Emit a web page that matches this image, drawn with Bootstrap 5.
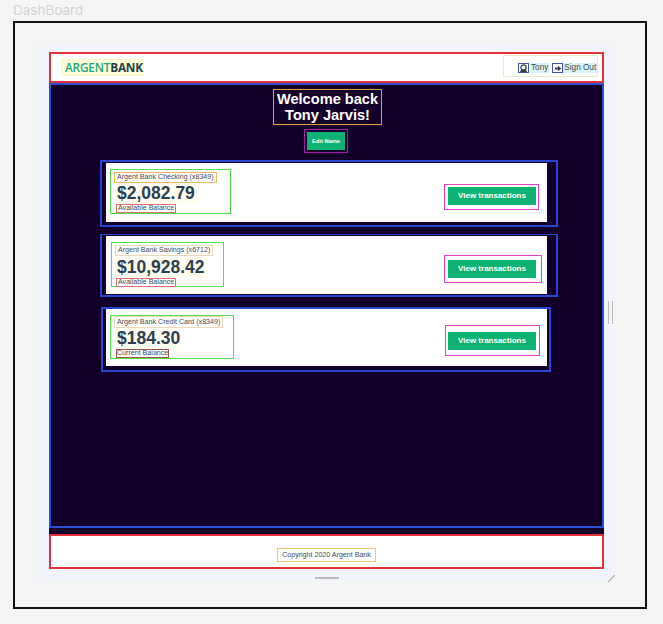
<!DOCTYPE html>
<html lang="en">
<head>
<meta charset="utf-8">
<title>DashBoard</title>
<link href="https://cdn.jsdelivr.net/npm/bootstrap@5.3.0/dist/css/bootstrap.min.css" rel="stylesheet">
<style>
html,body{height:100%}
body{background:#f5f5f5;font-family:"Liberation Sans",Arial,sans-serif;margin:0;overflow:hidden}
.page-title{font-family:Inter,sans-serif;font-size:13.5px;line-height:14px;color:#d4d4d4;margin:0;padding:3px 0 4px 13px;height:21px}
.frame{box-sizing:border-box;width:634px;height:588px;margin-left:13px;border:2px solid #111;padding:22px 31px 0 23px}
.panel{box-sizing:border-box;width:576px;height:536px;background:#f2f4fb;padding:7px 10px 0 11px;position:relative}
.app-head{height:31px;background:#fff;border:2px solid #e5303a;padding:5px 4px 3px 10px}
.logo-box{width:83px;height:17px;background:#fdfdd8;border:1px solid #f6f6c8;font-family:"Open Sans",sans-serif;font-weight:600;font-size:11.8px;line-height:15px;padding-left:3px;letter-spacing:-.2px;white-space:nowrap}
.logo-a{color:#1fa877}
.logo-b{color:#24404a;font-weight:700}
.nav-box{box-sizing:border-box;width:95px;height:22px;margin-top:-4px;border:1px solid #e6f0c8;font-size:8.2px;padding:7px 0 0 14px;gap:1px;color:#3f4a55}
.ico-box{width:11px;height:10px;border:1px solid #4650b8;display:flex;align-items:center;justify-content:center;flex:none}
.ico-box svg{display:block}
.ico-tight{margin-right:-1px}
.link-chip{background:#d8f4f8;height:10px;line-height:10px;padding:0 1px;white-space:nowrap;margin-right:2px}
.dark-wrap{height:451px;background:#12002b}
.main-box{box-sizing:border-box;height:445px;border:2px solid #2a4fd0;padding-top:4px}
.hello{width:109px;height:36px;border:1px solid #e5a040;margin:0 0 0 222px;color:#fff;font-weight:700;font-size:14.6px;line-height:15.5px;text-align:center;padding-top:2px;white-space:nowrap}
.edit-box{width:44px;height:24px;border:1px solid #a01fa8;margin:4px 0 0 253px;padding:2px 0 0 2px}
.edit-btn{display:block;width:38px;height:18px;padding:0;border:0;border-radius:0;background:#0cb373;color:#fff;font-size:5.7px;font-weight:700;line-height:18px}
.acct-wrap{box-sizing:border-box;border:2px solid #2a45d0;margin-left:49px;width:458px}
.acct{background:#fff}
.acct-1{margin-top:7px;height:67px;padding:1px 9px 3px 4px}
.acct-2{margin-top:7px;height:63px;border-width:1px 2px 2px 2px;padding:1px 9px 2px 4px}
.acct-3{margin-top:10px;margin-left:50px;width:450px;height:65px;padding:0 2px 4px 3px;border-width:2px}
.acct-1 .acct{height:59px}
.acct-2 .acct{height:58px}
.acct-3 .acct{height:57px}
.info{box-sizing:border-box;border:1px solid #4fe050;height:45px}
.acct-1 .info{width:121px;margin:6px 0 0 4px;padding:2px 3px 0}
.acct-2 .info{width:113px;margin:6px 0 0 5px;padding:2px 3px 0}
.acct-3 .info{width:124px;margin:6px 0 0 4px;height:44px;padding:0 3px 0}
.acct-name{font-size:7.1px;line-height:9px;color:#3f4a55;border:1px solid #f0b860;padding:0 2px;width:fit-content;white-space:nowrap}
.acct-2 .acct-name,.acct-3 .acct-name{border-color:#ecd9b8}
.acct-3 .acct-name{line-height:10px}
.amount{font-size:17.5px;font-weight:700;line-height:21px;color:#2c3e50;background:#fffef0;width:fit-content;padding:0 2px;margin-left:1px;white-space:nowrap}
.acct-2 .amount{margin-left:0;margin-top:1px}
.note{font-size:7.1px;line-height:7px;color:#3f4a55;border:1px solid #e07070;width:fit-content;padding:0 1px;margin-left:2px;white-space:nowrap}
.acct-2 .note{margin-left:1px}
.acct-3 .note{border-color:#a05050;padding:0}
.cta-box{box-sizing:border-box;border:1px solid #e040d0;flex:none;background:#fffdff;padding-left:3px}
.acct-1 .cta-box{width:95px;height:26px;margin:21px 8px 0 0;padding-top:2px}
.acct-2 .cta-box{width:98px;height:28px;margin:19px 5px 0 0;padding-top:4px}
.acct-3 .cta-box{width:95px;height:31px;margin:16px 7px 0 0;padding-top:6px;padding-left:2px}
.cta-1{display:block;width:88px;height:18px;padding:0;border:0;border-radius:0;background:#0cb373;color:#fff;font-size:8px;font-weight:700;line-height:18px}
.app-foot{height:35px;background:#fff;border:2px solid #e5303a;display:flex;justify-content:center;padding-top:12px}
.copy{height:14px;border:1px solid #eecb70;font-size:7.1px;line-height:12px;padding:0 4px;color:#3f4a55;white-space:nowrap}
.grip-v{position:absolute;left:570px;top:256px;width:5px;height:23px;border-left:1px solid #bbb;border-right:1px solid #bbb}
.grip-h{position:absolute;left:277px;top:532px;width:24px;height:2px;background:#bbb}
.grip-c{position:absolute;left:570px;top:530px}
</style>
</head>
<body>
<p class="page-title">DashBoard</p>
<div class="frame">
  <div class="panel">
    <header class="app-head d-flex justify-content-between">
      <div class="logo-box"><span class="logo-a">ARGENT</span><span class="logo-b">BANK</span></div>
      <nav class="nav-box d-flex align-items-start">
        <span class="ico-box"><svg width="9" height="8" viewBox="0 0 9 8"><circle cx="4.500" cy="3.500" r="2.600" fill="none" stroke="#2c3e50" stroke-width="1.200"/><path d="M1 8c.4-1.800 1.800-2.400 3.500-2.400S7.600 6.200 8 8z" fill="#2c3e50"/></svg></span>
        <span class="link-chip">Tony</span>
        <span class="ico-box ico-tight"><svg width="8" height="7" viewBox="0 0 8 7"><path d="M1 2.500h3V.8L7.200 3.500 4 6.200V4.500H1z" fill="#2c3e50"/></svg></span>
        <span class="link-chip">Sign Out</span>
      </nav>
    </header>
    <div class="dark-wrap">
      <main class="main-box">
        <h1 class="hello">Welcome back<br>Tony Jarvis!</h1>
        <div class="edit-box"><button class="btn edit-btn" type="button">Edit Name</button></div>

        <section class="acct-wrap acct-1">
          <div class="acct d-flex justify-content-between align-items-start">
            <div class="info">
              <div class="acct-name">Argent Bank Checking (x8349)</div>
              <div class="amount">$2,082.79</div>
              <div class="note">Available Balance</div>
            </div>
            <div class="cta-box"><button class="btn cta-1" type="button">View transactions</button></div>
          </div>
        </section>

        <section class="acct-wrap acct-2">
          <div class="acct d-flex justify-content-between align-items-start">
            <div class="info">
              <div class="acct-name">Argent Bank Savings (x6712)</div>
              <div class="amount">$10,928.42</div>
              <div class="note">Available Balance</div>
            </div>
            <div class="cta-box"><button class="btn cta-1" type="button">View transactions</button></div>
          </div>
        </section>

        <section class="acct-wrap acct-3">
          <div class="acct d-flex justify-content-between align-items-start">
            <div class="info">
              <div class="acct-name">Argent Bank Credit Card (x8349)</div>
              <div class="amount">$184.30</div>
              <div class="note">Current Balance</div>
            </div>
            <div class="cta-box"><button class="btn cta-1" type="button">View transactions</button></div>
          </div>
        </section>
      </main>
    </div>
    <footer class="app-foot"><div class="copy">Copyright 2020 Argent Bank</div></footer>
    <div class="grip-v"></div>
    <div class="grip-h"></div>
    <svg class="grip-c" width="7" height="7" viewBox="0 0 7 7"><path d="M0 7 7 0" stroke="#aaa" stroke-width="1.200"/></svg>
  </div>
</div>
</body>
</html>
